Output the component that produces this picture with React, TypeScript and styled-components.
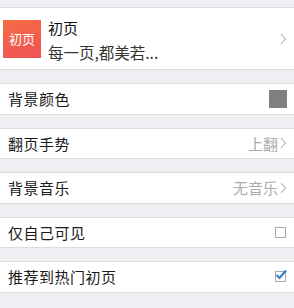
import React from "react";
import styled, { createGlobalStyle } from "styled-components";

const Global = createGlobalStyle`
  html, body { margin: 0; padding: 0; background: #efeff3; }
  body { font-family: "Noto Sans CJK SC", "Noto Sans", sans-serif; }
`;

const Page = styled.div`
  width: 294px;
  height: 308px;
  background: #efeff3;
  padding-top: 7px;
  box-sizing: border-box;
  overflow: hidden;
`;

const Card = styled.div<{ $gap?: number }>`
  background: #fff;
  border-top: 1px solid #dcdcdc;
  border-bottom: 1px solid #dcdcdc;
  margin-top: ${(p) => p.$gap ?? 0}px;
`;

const Header = styled(Card)`
  height: 63px;
  display: flex;
  align-items: center;
  padding: 0 7px 0 3px;
  box-sizing: border-box;
`;

const Logo = styled.div`
  width: 38px;
  height: 38px;
  background: linear-gradient(160deg, #f4663a 0%, #f0484e 100%);
  color: #fff;
  font-size: 13px;
  display: flex;
  align-items: center;
  justify-content: center;
  flex-shrink: 0;
  opacity: 0.95;
`;

const HeadText = styled.div`
  flex: 1;
  margin-left: 7px;
  display: flex;
  flex-direction: column;
  gap: 7px;
  padding-top: 2px;
`;

const Title = styled.div`
  font-size: 15px;
  line-height: 17px;
  color: #111;
`;

const Sub = styled.div`
  font-size: 15.5px;
  line-height: 18px;
  color: #333;
`;

const Row = styled(Card)`
  height: 31.5px;
  box-sizing: border-box;
  display: flex;
  align-items: center;
  padding: 0 7px 0 8px;
`;

const Label = styled.div`
  flex: 1;
  font-size: 15px;
  color: #1a1a1a;
  letter-spacing: 0.5px;
`;

const Value = styled.div`
  font-size: 15px;
  color: #ababab;
  display: flex;
  align-items: center;
`;

const Swatch = styled.div`
  width: 18px;
  height: 18px;
  background: #808080;
`;

const Box = styled.div<{ $on?: boolean }>`
  width: 9px;
  height: 9px;
  border: 1px solid #a8a8a8;
  position: relative;
  margin-right: 1px;
  background: #fff;
`;

const Chevron = () => (
  <svg width="7" height="12" viewBox="0 0 7 12" style={{ marginLeft: 2 }}>
    <path d="M1 1 L5.5 6 L1 11" fill="none" stroke="#c4c4c4" strokeWidth="1.3" />
  </svg>
);

const Check = () => (
  <svg width="12" height="11" viewBox="0 0 12 11" style={{ position: "absolute", left: -1, top: -3 }}>
    <path d="M1.5 6 L4.5 9 L11 1.5" fill="none" stroke="#2f7fc8" strokeWidth="2" />
  </svg>
);

export default function App() {
  return (
    <Page>
      <Global />
      <Header>
        <Logo>初页</Logo>
        <HeadText>
          <Title>初页</Title>
          <Sub>每一页,都美若...</Sub>
        </HeadText>
        <Chevron />
      </Header>
      <Row $gap={13}>
        <Label>背景颜色</Label>
        <Swatch />
      </Row>
      <Row $gap={13}>
        <Label>翻页手势</Label>
        <Value>
          上翻
          <Chevron />
        </Value>
      </Row>
      <Row $gap={13}>
        <Label>背景音乐</Label>
        <Value>
          无音乐
          <Chevron />
        </Value>
      </Row>
      <Row $gap={13}>
        <Label>仅自己可见</Label>
        <Box />
      </Row>
      <Row $gap={13}>
        <Label>推荐到热门初页</Label>
        <Box $on>
          <Check />
        </Box>
      </Row>
    </Page>
  );
}
